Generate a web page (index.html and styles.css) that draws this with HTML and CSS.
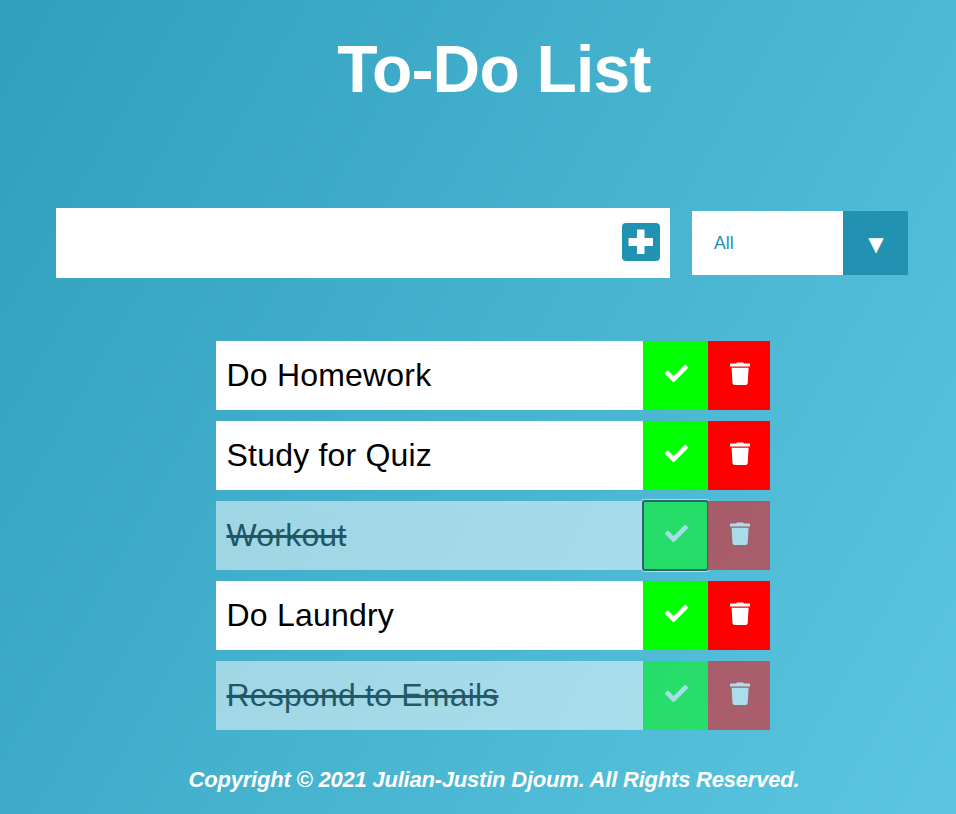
FILE: index.html
```html
<!DOCTYPE html>
<html lang="en">
<head>
<meta charset="utf-8">
<title>To-Do List</title>
<link rel="stylesheet" href="styles.css">
</head>
<body>
<svg width="0" height="0" class="defs">
<symbol id="check" viewBox="0 0 512 512"><path d="M173.898 439.404l-166.4-166.4c-9.997-9.997-9.997-26.206 0-36.204l36.203-36.204c9.997-9.998 26.207-9.998 36.204 0L192 312.69 432.095 72.596c9.997-9.997 26.207-9.997 36.204 0l36.203 36.204c9.997 9.997 9.997 26.206 0 36.204l-294.4 294.401c-9.998 9.997-26.207 9.997-36.204-.001z"/></symbol>
<symbol id="trash" viewBox="0 0 20 23"><path d="M.5 1.500H6L7 .5H13L14 1.500H19.500Q20 1.500 20 2V4Q20 4.600 19.500 4.600H.5Q0 4.600 0 4V2Q0 1.500 .5 1.500ZM1.600 5.700H18.600L17.700 21Q17.600 23 15.700 23H4.500Q2.600 23 2.500 21Z"/></symbol>
<symbol id="plus" viewBox="0 0 38 38"><path fill-rule="evenodd" d="M4 0H34Q38 0 38 4V34Q38 38 34 38H4Q0 38 0 34V4Q0 0 4 0ZM15.500 6.500Q15 6.500 15 7V15H7Q6.500 15 6.500 15.500V22.500Q6.500 23 7 23H15V30.500Q15 31 15.500 31H22Q22.500 31 22.500 30.500V23H30.500Q31 23 31 22.500V15.500Q31 15 30.500 15H22.500V7Q22.500 6.500 22 6.500Z"/></symbol>
</svg>
<header><h1>To-Do List</h1></header>
<form>
<div class="entry"><input type="text" class="todo-input" aria-label="New item"><button type="button" class="add" aria-label="Add"><svg><use href="#plus"/></svg></button></div>
<div class="select"><span class="value">All</span><span class="arrow">▼</span></div>
</form>
<ul>
<li><span class="text">Do Homework</span><button class="done"><svg><use href="#check"/></svg></button><button class="remove"><svg><use href="#trash"/></svg></button></li>
<li><span class="text">Study for Quiz</span><button class="done"><svg><use href="#check"/></svg></button><button class="remove"><svg><use href="#trash"/></svg></button></li>
<li class="completed"><span class="text">Workout</span><button class="done focused"><svg><use href="#check"/></svg></button><button class="remove"><svg><use href="#trash"/></svg></button></li>
<li><span class="text">Do Laundry</span><button class="done"><svg><use href="#check"/></svg></button><button class="remove"><svg><use href="#trash"/></svg></button></li>
<li class="completed"><span class="text">Respond to Emails</span><button class="done"><svg><use href="#check"/></svg></button><button class="remove"><svg><use href="#trash"/></svg></button></li>
</ul>
<footer>Copyright © 2021 Julian-Justin Djoum. All Rights Reserved.</footer>
</body>
</html>
```
FILE: styles.css
```css
* { box-sizing: border-box; margin: 0; padding: 0; }
html { height: 100%; }
body {
  height: 814px;
  overflow: hidden;
  font-family: "Liberation Sans", Arial, sans-serif;
  color: #fff;
  background: linear-gradient(120deg, #2f9fbd, #5cc6e0);
}
.defs { display: block; height: 0; }
button { border: 0; color: #fff; }
svg { fill: currentColor; display: block; }
header { padding: 32px 0 0 32px; height: 208px; text-align: center; }
h1 { font-size: 66px; line-height: 75px; letter-spacing: -0.8px; }
form { display: flex; align-items: center; height: 70px; margin-left: 56px; gap: 22px; }
.entry { display: flex; width: 614px; height: 70px; background: #fff; }
.todo-input { flex: 1; min-width: 0; border: 0; outline: 0; font-size: 32px; padding: 8px; }
.add { width: 58px; background: #fff; color: #2292b2; display: flex; align-items: center; justify-content: center; }
.add svg { width: 38px; height: 38px; margin-top: -2px; }
.select { display: flex; width: 216px; height: 64px; background: #fff; }
.value { flex: 1; padding-left: 22px; font-size: 17.6px; line-height: 64px; color: #2292b2; }
.arrow { width: 65px; padding-left: 1px; background: #2292b2; text-align: center; font: 20px/67px "DejaVu Sans", sans-serif; }
ul { list-style: none; width: 554px; margin: 63px 0 0 216px; display: grid; gap: 11px; }
li { display: flex; height: 69px; background: #fff; color: #000; }
.text { flex: 1; padding-left: 10.5px; font-size: 32px; line-height: 69px; letter-spacing: 0.2px; }
li button { display: flex; align-items: center; justify-content: center; }
.done { width: 65px; background: #0f0; }
.remove { width: 62px; background: #f00; }
.done svg { width: 23px; height: 23px; margin: -4px 0 0 1px; }
.remove svg { width: 20px; height: 23px; margin: -4px 0 0 1px; }
.completed { opacity: .5; }
.completed .text { text-decoration: line-through; }
.focused { outline: 2px solid #101010; outline-offset: -1px; border-radius: 2px; box-shadow: 0 0 0 2px #fff; }
footer { margin-top: 37px; padding-left: 32px; text-align: center; font-size: 22px; line-height: 26px; font-weight: bold; font-style: italic; letter-spacing: -0.21px; }
```
